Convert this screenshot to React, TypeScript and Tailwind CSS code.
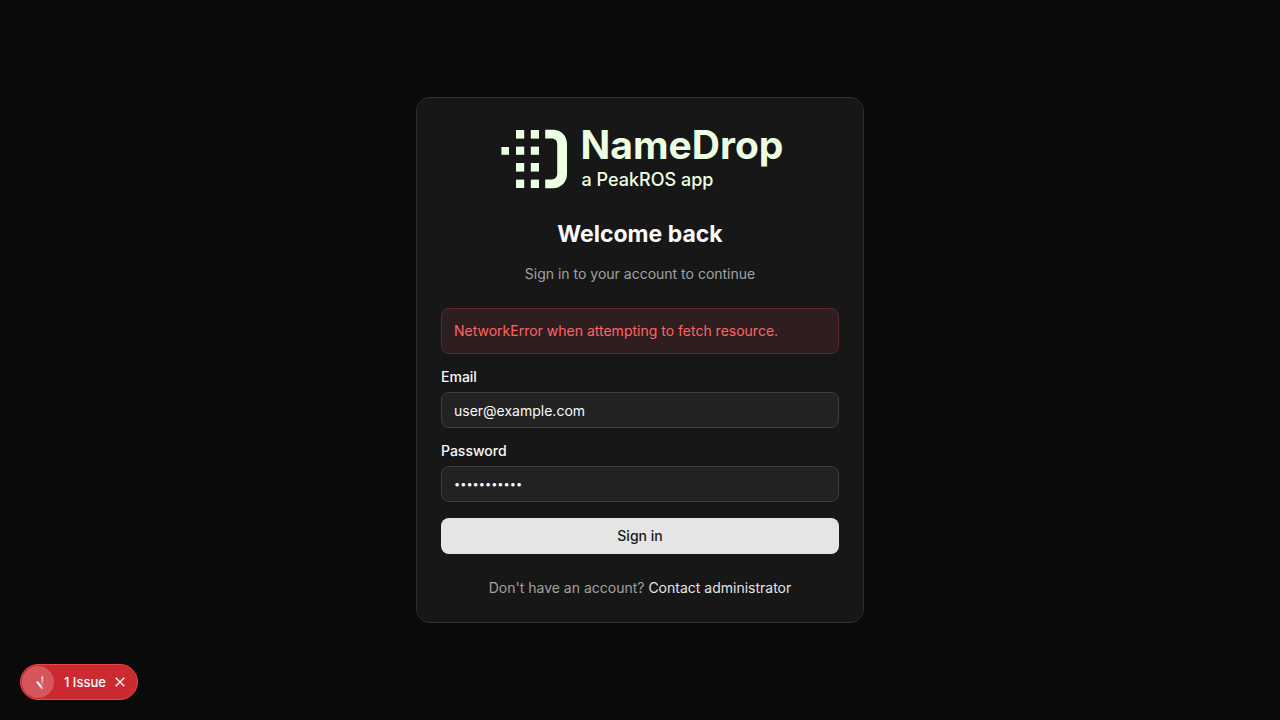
import { useState, type InputHTMLAttributes } from "react";

function LogoMark() {
  return (
    <svg width="66" height="60" viewBox="0 0 66 60" fill="#ecffe3" aria-hidden="true">
      <rect x="0.4" y="18" width="7.6" height="7.8" />
      <rect x="15" y="1" width="8.2" height="8.6" />
      <rect x="15" y="17.6" width="8.2" height="8.2" />
      <rect x="15" y="34" width="8.2" height="8.6" />
      <rect x="15" y="50.6" width="8.2" height="8.4" />
      <rect x="29.8" y="1" width="8.2" height="8.6" />
      <rect x="29.8" y="17.6" width="8.2" height="8.2" />
      <rect x="29.8" y="34" width="8.2" height="8.6" />
      <rect x="29.8" y="50.6" width="8.2" height="8.4" />
      <path d="M44.2 0.8H51.8C60 0.8 66 6.8 66 15V45C66 53.2 60 59.2 51.8 59.2H44.2V50.4H50.6C54 50.4 56.2 48.2 56.2 44.8V15.2C56.2 11.8 54 9.6 50.6 9.6H44.2Z" />
    </svg>
  );
}

function Logo() {
  return (
    <div className="flex items-center gap-3.5 pl-1 text-left text-[#ecffe3]">
      <LogoMark />
      <div className="flex flex-col">
        <span className="text-[39px] font-bold leading-[34px]">NameDrop</span>
        <span className="pt-2 pl-px text-lg font-medium leading-5">a PeakROS app</span>
      </div>
    </div>
  );
}

type FieldProps = InputHTMLAttributes<HTMLInputElement> & { id: string; label: string };

function Field({ id, label, ...props }: FieldProps) {
  return (
    <div className="flex flex-col gap-2">
      <label htmlFor={id} className="text-sm font-medium leading-3.5">
        {label}
      </label>
      <input
        id={id}
        className="h-9 w-full rounded-lg border border-[#3e3e3e] bg-[#222222] px-3 text-sm outline-none focus-visible:border-neutral-500 [&[type=password]]:text-[11px]"
        {...props}
      />
    </div>
  );
}

function IssueBadge({ onClose }: { onClose: () => void }) {
  return (
    <div className="fixed bottom-5 left-5 flex h-9 items-center rounded-full border border-[#e5484d] bg-[#ca2a30] pl-px pr-[9px] text-white">
      <button type="button" aria-label="Open developer tools" className="flex size-8 items-center justify-center rounded-full bg-[#d6565b]">
        <svg width="32" height="32" viewBox="0 0 32 32" fill="none" aria-hidden="true">
          <defs>
            <linearGradient id="stem" x1="20" y1="10" x2="20" y2="20" gradientUnits="userSpaceOnUse">
              <stop stopColor="#fff" />
              <stop offset="1" stopColor="#fff" stopOpacity="0" />
            </linearGradient>
            <linearGradient id="stroke" x1="15" y1="16" x2="21" y2="23" gradientUnits="userSpaceOnUse">
              <stop offset="0.5" stopColor="#fff" />
              <stop offset="1" stopColor="#fff" stopOpacity="0.25" />
            </linearGradient>
          </defs>
          <path d="M20.3 10.5V19" stroke="url(#stem)" strokeWidth="1.8" />
          <path d="M15 15.6L20.8 23.2" stroke="url(#stroke)" strokeWidth="2" />
        </svg>
      </button>
      <button type="button" className="pl-2.5 text-[13px] font-medium leading-4">
        1 Issue
      </button>
      <button type="button" aria-label="Dismiss issue" onClick={onClose} className="ml-1.5 flex size-4 items-center justify-center">
        <svg width="10" height="10" viewBox="0 0 10 10" fill="none" stroke="currentColor" strokeWidth="1.3" aria-hidden="true">
          <path d="M0.7 0.7L9.3 9.3M9.3 0.7L0.7 9.3" />
        </svg>
      </button>
    </div>
  );
}

export default function App() {
  const [showIssue, setShowIssue] = useState(true);

  return (
    <div className="flex min-h-screen items-center justify-center bg-[#0a0a0a] p-4 font-['Inter',sans-serif] text-neutral-50">
      <main className="w-full max-w-md rounded-[14px] border border-[#2e2e2e] bg-[#171717] p-6">
        <header className="flex flex-col items-center pt-1.5 text-center">
          <Logo />
          <h1 className="mt-7 text-[23px] font-bold leading-8">Welcome back</h1>
          <p className="mt-3.5 text-sm text-[#a1a1a1]">Sign in to your account to continue</p>
        </header>
        <form className="mt-6 flex flex-col gap-4" onSubmit={(event) => event.preventDefault()}>
          <div role="alert" className="rounded-lg border border-[#5c2a2c] bg-[#2e1e1f] p-3 text-sm text-[#ff6467]">
            NetworkError when attempting to fetch resource.
          </div>
          <Field id="email" label="Email" type="email" defaultValue="user@example.com" />
          <Field id="password" label="Password" type="password" defaultValue="password123" />
          <button type="submit" className="h-9 rounded-lg bg-[#e5e5e5] text-sm font-medium text-[#171717]">
            Sign in
          </button>
        </form>
        <p className="mt-6 text-center text-sm text-[#a1a1a1]">
          Don't have an account?{" "}
          <a href="#contact" className="text-[#e5e5e5] hover:underline">
            Contact administrator
          </a>
        </p>
      </main>
      {showIssue && <IssueBadge onClose={() => setShowIssue(false)} />}
    </div>
  );
}
